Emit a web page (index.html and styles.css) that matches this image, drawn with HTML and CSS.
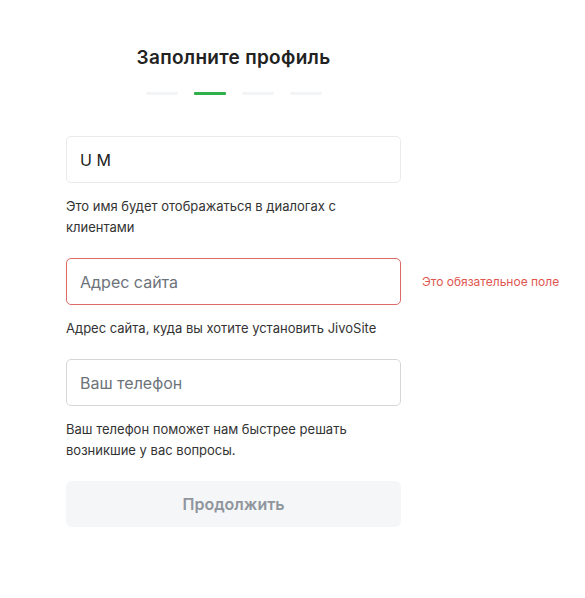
FILE: index.html
```html
<!DOCTYPE html>
<html lang="ru">
<head>
  <meta charset="UTF-8" />
  <title>Заполните профиль</title>
  <link rel="stylesheet" href="styles.css">
</head>
<body>

  <div class="profile-container">
    <h2>Заполните профиль</h2>
    <div class="steps">
      <span class="step"></span>
      <span class="step active"></span>
      <span class="step"></span>
      <span class="step"></span>
    </div>

    <form id="profileForm">
      <div class="field">
        <div class="field-row">
          <input type="text" id="name" name="name" value="U M" />
        </div>
        <p class="hint">Это имя будет отображаться в диалогах с клиентами</p>
      </div>

      <div class="field">
        <div class="field-row">
          <input type="text" id="site" name="site" class="invalid" placeholder="Адрес сайта" />
          <span class="error">Это обязательное поле</span>
        </div>
        <p class="hint">Адрес сайта, куда вы хотите установить JivoSite</p>
      </div>

      <div class="field">
        <div class="field-row">
          <input type="text" id="phone" name="phone" placeholder="Ваш телефон" />
        </div>
        <p class="hint">Ваш телефон поможет нам быстрее решать возникшие у вас вопросы.</p>
      </div>

      <button type="submit" disabled>Продолжить</button>
    </form>
  </div>

</body>
</html>
```

FILE: styles.css
```css
body {
  margin: 0;
  font-family: Inter, 'Noto Sans', sans-serif;
  background: #fff;
  color: #333;
}

.profile-container {
  width: 335px;
  padding: 46px 0 0 66px;
}

h2 {
  margin: 0;
  text-align: center;
  font-size: 19px;
  font-weight: 600;
  letter-spacing: 0.3px;
  line-height: 24px;
  color: #222;
}

.steps {
  display: flex;
  justify-content: center;
  gap: 16px;
  margin-top: 22px;
  margin-bottom: 41px;
}

.step {
  width: 32px;
  height: 3px;
  background: #f3f4f6;
  border-radius: 1px;
}

.step.active {
  background: #2fb04a;
}

.field {
  margin-bottom: 20px;
}

.field-row {
  display: flex;
  align-items: center;
  width: max-content;
}

input[type="text"] {
  box-sizing: border-box;
  width: 335px;
  height: 47px;
  padding: 0 13px;
  border: 1px solid #e9eaec;
  border-radius: 5px;
  font-family: inherit;
  font-size: 16px;
  color: #222;
  outline: none;
}

input::placeholder {
  color: #6d737a;
}

input.invalid {
  border-color: #dd6a66;
}

input#phone {
  border-color: #d4d6d9;
}

.error {
  margin-left: 21px;
  font-size: 12px;
  color: #e0564f;
  white-space: nowrap;
}

.hint {
  margin: 13px 0 0;
  font-size: 13px;
  line-height: 21px;
  color: #333;
}

button {
  display: block;
  width: 335px;
  height: 46px;
  margin-top: 0;
  background: #f5f6f8;
  border: none;
  border-radius: 6px;
  color: #8f959c;
  font-family: inherit;
  font-weight: 600;
  font-size: 16px;
  cursor: default;
}
```
